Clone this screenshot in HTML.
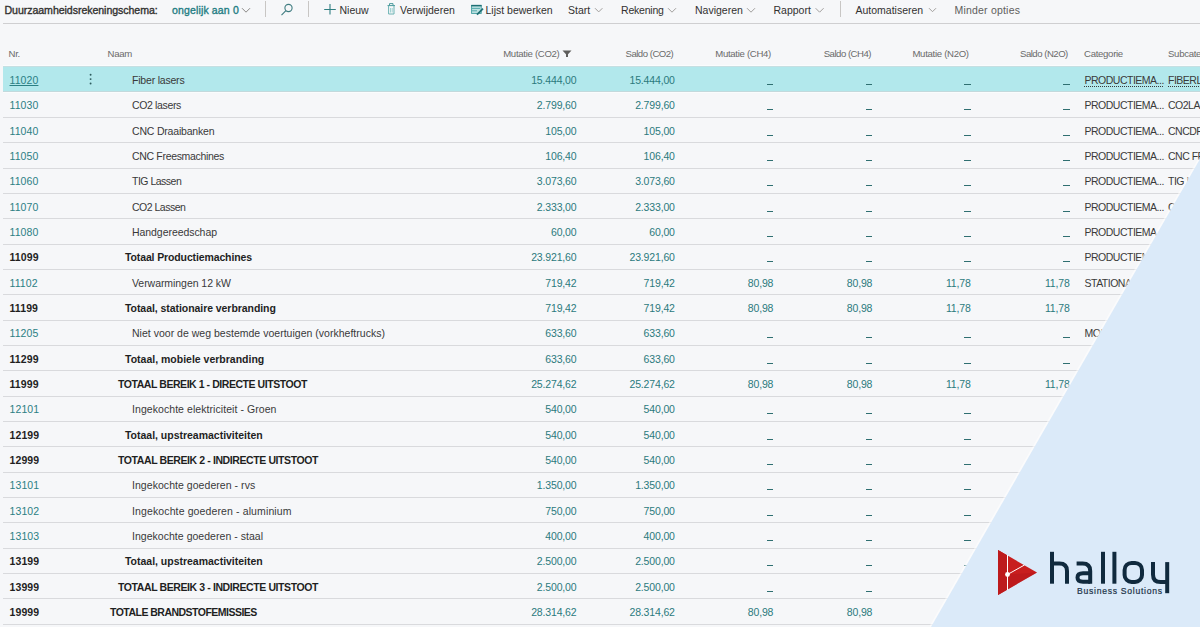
<!DOCTYPE html>
<html><head><meta charset="utf-8">
<style>
*{margin:0;padding:0;box-sizing:border-box}
html,body{width:1200px;height:627px;overflow:hidden;background:#f6f7f9;font-family:"Liberation Sans",sans-serif;}
#wrap{position:relative;width:1200px;height:627px;overflow:hidden}
.tb{position:absolute;top:0;left:0;width:1200px;height:24px;}
.tbline{position:absolute;top:23px;left:3px;right:0;height:1px;background:#cfcfd1}
.tt{position:absolute;top:4.3px;font-size:10.5px;line-height:12px;color:#323130;white-space:nowrap}
.hd{position:absolute;top:47.5px;font-size:9.6px;line-height:11px;color:#6a6a6a;white-space:nowrap}
.row{position:absolute;left:3px;width:1197px;height:25.33px}
.hl{position:absolute;left:3px;width:1197px;background:#b2e8ec}
.ln{position:absolute;left:3px;width:1197px;height:1px;background:#d9dadd}
.t{position:absolute;top:8px;font-size:10.5px;line-height:12px;white-space:nowrap;color:#393939}
.row .t{margin-left:-3px}
.row .t.v{margin-left:0}
.nr{color:#2b8084;letter-spacing:0.1px}
.nm{letter-spacing:-0.15px}
.nm.caps{letter-spacing:-0.45px}
.v{letter-spacing:-0.15px}
.cat{letter-spacing:-0.5px}
.hd{letter-spacing:-0.3px}
.nr.b,.nm.b{color:#1f1f1f;font-weight:bold}
.v{color:#2b7a7d;letter-spacing:-0.15px}
.cat{color:#3a3a3a}
.dash{position:absolute;top:18px;width:6.3px;height:1px;background:#2f6f71;margin-left:-3px}
.dots{position:absolute;left:87px;top:8px;width:2px;height:10px;background:radial-gradient(circle,#444 0.9px,transparent 1.1px) 0 0/2px 3.5px repeat-y}
</style></head><body><div id="wrap">
<div class="tb">
<span class="tt" style="left:4.5px;font-size:10.6px;letter-spacing:-0.06px;-webkit-text-stroke:0.35px #323130">Duurzaamheidsrekeningschema:</span>
<span class="tt" style="left:172px;color:#1f7d83;letter-spacing:0.15px;-webkit-text-stroke:0.35px #1f7d83">ongelijk aan 0</span>
<span class="tt" style="left:339.5px">Nieuw</span>
<span class="tt" style="left:400px">Verwijderen</span>
<span class="tt" style="left:485.5px">Lijst bewerken</span>
<span class="tt" style="left:568px">Start</span>
<span class="tt" style="left:621px;letter-spacing:-0.2px">Rekening</span>
<span class="tt" style="left:695px">Navigeren</span>
<span class="tt" style="left:773.5px">Rapport</span>
<span class="tt" style="left:855.5px">Automatiseren</span>
<span class="tt" style="left:954.5px;color:#605e5c;letter-spacing:0.2px">Minder opties</span>
<div class="tbline"></div>
<svg class="ic" width="1200" height="24" style="position:absolute;left:0;top:0" viewBox="0 0 1200 24">
<g fill="none" stroke-width="1">
<path d="M242,8.2 L246,12.2 L250,8.2" stroke="#8a8886"/>
<path d="M265.5,1 V17" stroke="#c8c6c4"/>
<circle cx="288.5" cy="8" r="3.6" stroke="#3f7c80" stroke-width="1.1"/>
<path d="M285.9,10.7 L281.5,15.2" stroke="#3f7c80" stroke-width="1.1"/>
<path d="M308.5,1 V17" stroke="#c8c6c4"/>
<path d="M324.2,9.5 H335.8 M330,4 V14.6" stroke="#2f7f82" stroke-width="1.1"/>
<path d="M387.5,5.6 H395 M389.5,5.6 V3.6 H393 V5.6" stroke="#4a9a9c" stroke-width="1"/>
<path d="M388.6,6 V14 H394 V6" stroke="#6bb2b3" stroke-width="1"/>
<path d="M390.5,8 V12.5 M392.2,8 V12.5" stroke="#8cc8c9" stroke-width="0.8"/>
<rect x="471.6" y="5.6" width="9.6" height="7.8" fill="#bfe3e3" stroke="#3f9c9e" stroke-width="0.9"/>
<path d="M471.2,5.6 H481.6" stroke="#1f6f74" stroke-width="1.5"/>
<path d="M472,8.4 H480 M472,10.8 H477" stroke="#4aa3a5" stroke-width="0.9"/>
<path d="M483,8.6 L477,14.6" stroke="#1f6f74" stroke-width="1.7"/>
<path d="M595,8.2 L598.7,11.9 L602.4,8.2" stroke="#a19f9d"/>
<path d="M668,8.2 L672,12.2 L676,8.2" stroke="#a19f9d"/>
<path d="M747,8.2 L751,12.2 L755,8.2" stroke="#a19f9d"/>
<path d="M815.6,8.2 L819.6,12.2 L823.6,8.2" stroke="#a19f9d"/>
<path d="M840.5,1 V17" stroke="#c8c6c4"/>
<path d="M929,8.2 L932.5,11.7 L936,8.2" stroke="#a19f9d"/>
</g>
</svg>
<svg style="position:absolute;left:0;top:0" width="1200" height="64"><path d="M562.5,50.5 H571.5 L568,54.2 V57 H566 V54.2 Z" fill="#5f5e5c"/></svg>

</div>
<span class="hd" style="left:8.5px">Nr.</span>
<span class="hd" style="left:107.5px">Naam</span>
<span class="hd" style="right:640.5px">Mutatie (CO2)</span>
<span class="hd" style="letter-spacing:-0.5px;right:526.7px">Saldo (CO2)</span>
<span class="hd" style="right:429px">Mutatie (CH4)</span>
<span class="hd" style="letter-spacing:-0.5px;right:329px">Saldo (CH4)</span>
<span class="hd" style="right:231.25px">Mutatie (N2O)</span>
<span class="hd" style="letter-spacing:-0.5px;right:132.20000000000005px">Saldo (N2O)</span>
<span class="hd" style="left:1084px">Categorie</span>
<span class="hd" style="left:1168px">Subcategorie</span>
<div class="hl" style="top:66px;height:26px"></div>
<div class="ln" style="top:91px;background:#c3d9dc"></div>
<div class="ln" style="top:66px;background:#c6dfe2"></div>
<div class="ln" style="top:65px;background:#fafcfd"></div>
<div class="ln" style="top:92px;background:#fafcfd"></div>
<div class="row sel" style="top:66.00px">
<span class="t nr" style="left:9.5px;text-decoration:underline;text-underline-offset:1px">11020</span>
<svg style="position:absolute;left:0;top:0" width="100" height="26"><g fill="#2d5c5e"><circle cx="87.6" cy="8.7" r="0.95"/><circle cx="87.6" cy="13.1" r="0.95"/><circle cx="87.6" cy="17.5" r="0.95"/></g></svg>
<span class="t nm" style="left:132px;letter-spacing:-0.2px">Fiber lasers</span>
<span class="t v" style="right:623.5px">15.444,00</span>
<span class="t v" style="right:525.2px">15.444,00</span>
<span class="dash" style="left:767.0px"></span>
<span class="dash" style="left:866.0px"></span>
<span class="dash" style="left:964.4000000000001px"></span>
<span class="dash" style="left:1063.4px"></span>
<span class="t cat" style="left:1084.5px;text-decoration:underline dotted;text-underline-offset:1.5px">PRODUCTIEMA...</span>
<span class="t cat" style="left:1168px;text-decoration:underline dotted;text-underline-offset:1.5px">FIBERLASERS</span>
</div>
<div class="ln" style="top:117px"></div>
<div class="row" style="top:91.33px">
<span class="t nr" style="left:9.5px">11030</span>
<span class="t nm" style="left:132px;letter-spacing:-0.356px">CO2 lasers</span>
<span class="t v" style="right:623.5px">2.799,60</span>
<span class="t v" style="right:525.2px">2.799,60</span>
<span class="dash" style="left:767.0px"></span>
<span class="dash" style="left:866.0px"></span>
<span class="dash" style="left:964.4000000000001px"></span>
<span class="dash" style="left:1063.4px"></span>
<span class="t cat" style="left:1084.5px">PRODUCTIEMA...</span>
<span class="t cat" style="left:1168px">CO2LASERS</span>
</div>
<div class="ln" style="top:142px"></div>
<div class="row" style="top:116.66px">
<span class="t nr" style="left:9.5px">11040</span>
<span class="t nm" style="left:132px;letter-spacing:-0.193px">CNC Draaibanken</span>
<span class="t v" style="right:623.5px">105,00</span>
<span class="t v" style="right:525.2px">105,00</span>
<span class="dash" style="left:767.0px"></span>
<span class="dash" style="left:866.0px"></span>
<span class="dash" style="left:964.4000000000001px"></span>
<span class="dash" style="left:1063.4px"></span>
<span class="t cat" style="left:1084.5px">PRODUCTIEMA...</span>
<span class="t cat" style="left:1168px">CNCDRAAIBANKEN</span>
</div>
<div class="ln" style="top:168px"></div>
<div class="row" style="top:141.99px">
<span class="t nr" style="left:9.5px">11050</span>
<span class="t nm" style="left:132px;letter-spacing:-0.325px">CNC Freesmachines</span>
<span class="t v" style="right:623.5px">106,40</span>
<span class="t v" style="right:525.2px">106,40</span>
<span class="dash" style="left:767.0px"></span>
<span class="dash" style="left:866.0px"></span>
<span class="dash" style="left:964.4000000000001px"></span>
<span class="dash" style="left:1063.4px"></span>
<span class="t cat" style="left:1084.5px">PRODUCTIEMA...</span>
<span class="t cat" style="left:1168px">CNC FREES</span>
</div>
<div class="ln" style="top:193px"></div>
<div class="row" style="top:167.32px">
<span class="t nr" style="left:9.5px">11060</span>
<span class="t nm" style="left:132px;letter-spacing:-0.5px">TIG Lassen</span>
<span class="t v" style="right:623.5px">3.073,60</span>
<span class="t v" style="right:525.2px">3.073,60</span>
<span class="dash" style="left:767.0px"></span>
<span class="dash" style="left:866.0px"></span>
<span class="dash" style="left:964.4000000000001px"></span>
<span class="dash" style="left:1063.4px"></span>
<span class="t cat" style="left:1084.5px">PRODUCTIEMA...</span>
<span class="t cat" style="left:1168px">TIG LASSEN</span>
</div>
<div class="ln" style="top:218px"></div>
<div class="row" style="top:192.65px">
<span class="t nr" style="left:9.5px">11070</span>
<span class="t nm" style="left:132px;letter-spacing:-0.5px">CO2 Lassen</span>
<span class="t v" style="right:623.5px">2.333,00</span>
<span class="t v" style="right:525.2px">2.333,00</span>
<span class="dash" style="left:767.0px"></span>
<span class="dash" style="left:866.0px"></span>
<span class="dash" style="left:964.4000000000001px"></span>
<span class="dash" style="left:1063.4px"></span>
<span class="t cat" style="left:1084.5px">PRODUCTIEMA...</span>
<span class="t cat" style="left:1168px">CO2 LASSEN</span>
</div>
<div class="ln" style="top:244px"></div>
<div class="row" style="top:217.98px">
<span class="t nr" style="left:9.5px">11080</span>
<span class="t nm" style="left:132px;letter-spacing:-0.057px">Handgereedschap</span>
<span class="t v" style="right:623.5px">60,00</span>
<span class="t v" style="right:525.2px">60,00</span>
<span class="dash" style="left:767.0px"></span>
<span class="dash" style="left:866.0px"></span>
<span class="dash" style="left:964.4000000000001px"></span>
<span class="dash" style="left:1063.4px"></span>
<span class="t cat" style="left:1084.5px">PRODUCTIEMA...</span>
<span class="t cat" style="left:1168px">HANDGEREEDSCHAP</span>
</div>
<div class="ln" style="top:269px"></div>
<div class="row" style="top:243.31px">
<span class="t nr b" style="left:9.5px">11099</span>
<span class="t nm b" style="left:125px;letter-spacing:-0.126px">Totaal Productiemachines</span>
<span class="t v" style="right:623.5px">23.921,60</span>
<span class="t v" style="right:525.2px">23.921,60</span>
<span class="dash" style="left:767.0px"></span>
<span class="dash" style="left:866.0px"></span>
<span class="dash" style="left:964.4000000000001px"></span>
<span class="dash" style="left:1063.4px"></span>
<span class="t cat" style="left:1084.5px">PRODUCTIEMA...</span>
</div>
<div class="ln" style="top:294px"></div>
<div class="row" style="top:268.64px">
<span class="t nr" style="left:9.5px">11102</span>
<span class="t nm" style="left:132px;letter-spacing:-0.053px">Verwarmingen 12 kW</span>
<span class="t v" style="right:623.5px">719,42</span>
<span class="t v" style="right:525.2px">719,42</span>
<span class="t v" style="right:426.70000000000005px">80,98</span>
<span class="t v" style="right:327.70000000000005px">80,98</span>
<span class="t v" style="right:229.29999999999995px">11,78</span>
<span class="t v" style="right:130.29999999999995px">11,78</span>
<span class="t cat" style="left:1084.5px">STATIONAIRE...</span>
<span class="t cat" style="left:1168px">VERWARMING</span>
</div>
<div class="ln" style="top:320px"></div>
<div class="row" style="top:293.97px">
<span class="t nr b" style="left:9.5px">11199</span>
<span class="t nm b" style="left:125px;letter-spacing:-0.06px">Totaal, stationaire verbranding</span>
<span class="t v" style="right:623.5px">719,42</span>
<span class="t v" style="right:525.2px">719,42</span>
<span class="t v" style="right:426.70000000000005px">80,98</span>
<span class="t v" style="right:327.70000000000005px">80,98</span>
<span class="t v" style="right:229.29999999999995px">11,78</span>
<span class="t v" style="right:130.29999999999995px">11,78</span>
</div>
<div class="ln" style="top:345px"></div>
<div class="row" style="top:319.30px">
<span class="t nr" style="left:9.5px">11205</span>
<span class="t nm" style="left:132px;letter-spacing:0.016px">Niet voor de weg bestemde voertuigen (vorkheftrucks)</span>
<span class="t v" style="right:623.5px">633,60</span>
<span class="t v" style="right:525.2px">633,60</span>
<span class="dash" style="left:767.0px"></span>
<span class="dash" style="left:866.0px"></span>
<span class="dash" style="left:964.4000000000001px"></span>
<span class="dash" style="left:1063.4px"></span>
<span class="t cat" style="left:1084.5px">MOBIELE...</span>
<span class="t cat" style="left:1168px">VORKHEF</span>
</div>
<div class="ln" style="top:370px"></div>
<div class="row" style="top:344.63px">
<span class="t nr b" style="left:9.5px">11299</span>
<span class="t nm b" style="left:125px;letter-spacing:0.0px">Totaal, mobiele verbranding</span>
<span class="t v" style="right:623.5px">633,60</span>
<span class="t v" style="right:525.2px">633,60</span>
<span class="dash" style="left:767.0px"></span>
<span class="dash" style="left:866.0px"></span>
<span class="dash" style="left:964.4000000000001px"></span>
<span class="dash" style="left:1063.4px"></span>
</div>
<div class="ln" style="top:396px"></div>
<div class="row" style="top:369.96px">
<span class="t nr b" style="left:9.5px">11999</span>
<span class="t nm b" style="left:118px;letter-spacing:-0.442px">TOTAAL BEREIK 1 - DIRECTE UITSTOOT</span>
<span class="t v" style="right:623.5px">25.274,62</span>
<span class="t v" style="right:525.2px">25.274,62</span>
<span class="t v" style="right:426.70000000000005px">80,98</span>
<span class="t v" style="right:327.70000000000005px">80,98</span>
<span class="t v" style="right:229.29999999999995px">11,78</span>
<span class="t v" style="right:130.29999999999995px">11,78</span>
</div>
<div class="ln" style="top:421px"></div>
<div class="row" style="top:395.29px">
<span class="t nr" style="left:9.5px">12101</span>
<span class="t nm" style="left:132px;letter-spacing:0.065px">Ingekochte elektriciteit - Groen</span>
<span class="t v" style="right:623.5px">540,00</span>
<span class="t v" style="right:525.2px">540,00</span>
<span class="dash" style="left:767.0px"></span>
<span class="dash" style="left:866.0px"></span>
<span class="dash" style="left:964.4000000000001px"></span>
<span class="dash" style="left:1063.4px"></span>
</div>
<div class="ln" style="top:446px"></div>
<div class="row" style="top:420.62px">
<span class="t nr b" style="left:9.5px">12199</span>
<span class="t nm b" style="left:125px;letter-spacing:-0.015px">Totaal, upstreamactiviteiten</span>
<span class="t v" style="right:623.5px">540,00</span>
<span class="t v" style="right:525.2px">540,00</span>
<span class="dash" style="left:767.0px"></span>
<span class="dash" style="left:866.0px"></span>
<span class="dash" style="left:964.4000000000001px"></span>
<span class="dash" style="left:1063.4px"></span>
</div>
<div class="ln" style="top:472px"></div>
<div class="row" style="top:445.95px">
<span class="t nr b" style="left:9.5px">12999</span>
<span class="t nm b" style="left:118px;letter-spacing:-0.4px">TOTAAL BEREIK 2 - INDIRECTE UITSTOOT</span>
<span class="t v" style="right:623.5px">540,00</span>
<span class="t v" style="right:525.2px">540,00</span>
<span class="dash" style="left:767.0px"></span>
<span class="dash" style="left:866.0px"></span>
<span class="dash" style="left:964.4000000000001px"></span>
<span class="dash" style="left:1063.4px"></span>
</div>
<div class="ln" style="top:497px"></div>
<div class="row" style="top:471.28px">
<span class="t nr" style="left:9.5px">13101</span>
<span class="t nm" style="left:132px;letter-spacing:0.05px">Ingekochte goederen - rvs</span>
<span class="t v" style="right:623.5px">1.350,00</span>
<span class="t v" style="right:525.2px">1.350,00</span>
<span class="dash" style="left:767.0px"></span>
<span class="dash" style="left:866.0px"></span>
<span class="dash" style="left:964.4000000000001px"></span>
<span class="dash" style="left:1063.4px"></span>
</div>
<div class="ln" style="top:522px"></div>
<div class="row" style="top:496.61px">
<span class="t nr" style="left:9.5px">13102</span>
<span class="t nm" style="left:132px;letter-spacing:0.123px">Ingekochte goederen - aluminium</span>
<span class="t v" style="right:623.5px">750,00</span>
<span class="t v" style="right:525.2px">750,00</span>
<span class="dash" style="left:767.0px"></span>
<span class="dash" style="left:866.0px"></span>
<span class="dash" style="left:964.4000000000001px"></span>
<span class="dash" style="left:1063.4px"></span>
</div>
<div class="ln" style="top:548px"></div>
<div class="row" style="top:521.94px">
<span class="t nr" style="left:9.5px">13103</span>
<span class="t nm" style="left:132px;letter-spacing:0.031px">Ingekochte goederen - staal</span>
<span class="t v" style="right:623.5px">400,00</span>
<span class="t v" style="right:525.2px">400,00</span>
<span class="dash" style="left:767.0px"></span>
<span class="dash" style="left:866.0px"></span>
<span class="dash" style="left:964.4000000000001px"></span>
<span class="dash" style="left:1063.4px"></span>
</div>
<div class="ln" style="top:573px"></div>
<div class="row" style="top:547.27px">
<span class="t nr b" style="left:9.5px">13199</span>
<span class="t nm b" style="left:125px;letter-spacing:-0.015px">Totaal, upstreamactiviteiten</span>
<span class="t v" style="right:623.5px">2.500,00</span>
<span class="t v" style="right:525.2px">2.500,00</span>
<span class="dash" style="left:767.0px"></span>
<span class="dash" style="left:866.0px"></span>
<span class="dash" style="left:964.4000000000001px"></span>
<span class="dash" style="left:1063.4px"></span>
</div>
<div class="ln" style="top:598px"></div>
<div class="row" style="top:572.60px">
<span class="t nr b" style="left:9.5px">13999</span>
<span class="t nm b" style="left:118px;letter-spacing:-0.4px">TOTAAL BEREIK 3 - INDIRECTE UITSTOOT</span>
<span class="t v" style="right:623.5px">2.500,00</span>
<span class="t v" style="right:525.2px">2.500,00</span>
<span class="dash" style="left:767.0px"></span>
<span class="dash" style="left:866.0px"></span>
<span class="dash" style="left:964.4000000000001px"></span>
<span class="dash" style="left:1063.4px"></span>
</div>
<div class="ln" style="top:624px"></div>
<div class="row" style="top:597.93px">
<span class="t nr b" style="left:9.5px">19999</span>
<span class="t nm b" style="left:110px;letter-spacing:-0.522px">TOTALE BRANDSTOFEMISSIES</span>
<span class="t v" style="right:623.5px">28.314,62</span>
<span class="t v" style="right:525.2px">28.314,62</span>
<span class="t v" style="right:426.70000000000005px">80,98</span>
<span class="t v" style="right:327.70000000000005px">80,98</span>
<span class="t v" style="right:229.29999999999995px">11,78</span>
<span class="t v" style="right:130.29999999999995px">11,78</span>
</div>

<svg style="position:absolute;left:0;top:0" width="1200" height="627" viewBox="0 0 1200 627">
<path d="M1200,159 L931,627" stroke="#ffffff" stroke-opacity="0.55" stroke-width="3.5"/>
<polygon points="1200,159 1200,627 931,627" fill="#dbeaf9"/>
<g transform="translate(0,0)">
<polygon points="998,550 998,595 1037,572.5" fill="#c81e1e"/>
<polygon points="998,550 1007.5,555.5 1007.5,589.5 998,595" fill="#bd1a1c"/>
<polygon points="1007.5,574.5 1037,572.5 1007.5,589.5" fill="#b8181a" opacity="0.6"/>
<path d="M1007.5,555 V590 M1007.5,574.5 L1024.5,565" stroke="#fff" stroke-width="1" fill="none"/>
<circle cx="1007.5" cy="574.5" r="2.4" fill="#fff"/>
</g>
<g fill="none" stroke="#102a3e" stroke-width="4">
<path d="M1052,551.8 V583.7"/>
<path d="M1052,563.4 H1059.5 Q1067,563.4 1067,570.9 V583.7"/>
<path d="M1076.6,563.4 H1082.7 Q1090.2,563.4 1090.2,570.9 V583.7"/>
<path d="M1090.2,573.2 H1083 Q1077.5,573.2 1077.5,577.45 Q1077.5,581.7 1083,581.7 H1090.2"/>
<path d="M1103,551.8 V583.7"/>
<path d="M1114.4,551.8 V583.7"/>
<rect x="1124.6" y="562.9" width="17.4" height="19" rx="7" ry="7"/>
<path d="M1153,562.1 V574.5 Q1153,582 1160.5,582 H1167.2"/>
<path d="M1167.2,562.1 V593.2"/>
</g>
<text x="1077" y="593.6" font-family="Liberation Sans" font-size="8.6" fill="#1c3348" textLength="85" lengthAdjust="spacing" stroke="#1c3348" stroke-width="0.2">Business Solutions</text>
</svg>
</div></body></html>
